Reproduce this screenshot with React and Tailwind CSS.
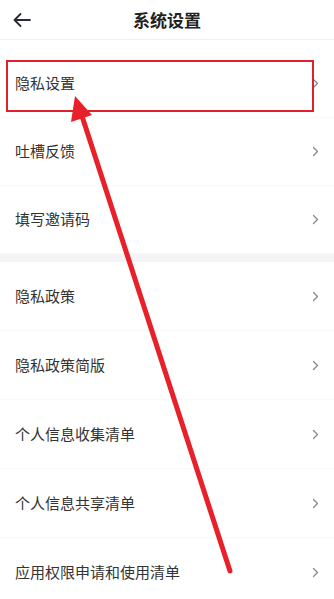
import React from 'react';

const groupA = ['隐私设置', '吐槽反馈', '填写邀请码'];
const groupB = ['隐私政策', '隐私政策简版', '个人信息收集清单', '个人信息共享清单', '应用权限申请和使用清单'];

function Chevron() {
  return (
    <svg width="7" height="11" viewBox="0 0 7 11" className="shrink-0">
      <path d="M1.5 1.5 L5.5 5.5 L1.5 9.5" fill="none" stroke="#8a8a8a" strokeWidth="1.3" strokeLinecap="round" strokeLinejoin="round" />
    </svg>
  );
}

function Row({ label, h }) {
  return (
    <div className={`flex items-center justify-between pl-[15px] pr-[15px] ${h} border-b border-[#f9f9f9]`}>
      <span className="text-[15px] text-[#333]">{label}</span>
      <Chevron />
    </div>
  );
}

export default function App() {
  return (
    <div
      className="relative w-[334px] h-[599px] overflow-hidden bg-white"
      style={{ fontFamily: '"Noto Sans CJK SC", "Noto Sans", sans-serif' }}
    >
      {/* header */}
      <div className="flex items-center h-[40px] border-b border-[#f0f0f2] px-[12px]">
        <svg width="20" height="16" viewBox="0 0 20 16">
          <path d="M18 8 H3 M8.5 2 L2.5 8 L8.5 14" fill="none" stroke="#2a2a33" strokeWidth="1.8" strokeLinecap="round" strokeLinejoin="round" />
        </svg>
        <div className="flex-1 text-center text-[17px] font-bold text-[#222] pr-[20px]">系统设置</div>
      </div>

      <div className="h-[10px]" />
      {groupA.map((t) => (
        <Row key={t} label={t} h="h-[68px]" />
      ))}

      <div className="h-[8px] bg-[#f4f4f6]" />

      {groupB.map((t) => (
        <Row key={t} label={t} h="h-[69px]" />
      ))}

      {/* annotation overlay */}
      <div className="absolute left-[6px] top-[60px] w-[308px] h-[52px] border-[2.5px] border-[#e2202c]" />
      <svg className="absolute inset-0 pointer-events-none" width="334" height="599">
        <line x1="230" y1="571" x2="81" y2="113" stroke="#e8202a" strokeWidth="5" strokeLinecap="round" />
        <polygon points="75,96 92,115 71,122" fill="#e8202a" />
      </svg>
    </div>
  );
}
